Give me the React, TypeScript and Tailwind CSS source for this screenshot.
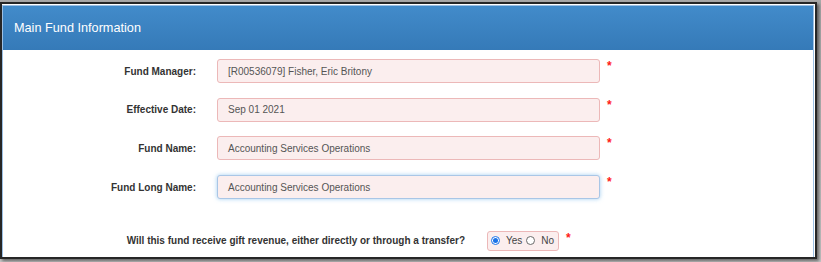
const fields = [
  { label: 'Fund Manager:', value: '[R00536079] Fisher, Eric Britony', focused: false },
  { label: 'Effective Date:', value: 'Sep 01 2021', focused: false },
  { label: 'Fund Name:', value: 'Accounting Services Operations', focused: false },
  { label: 'Fund Long Name:', value: 'Accounting Services Operations', focused: true },
];

const Required = () => (
  <span className="ml-[7px] self-start pt-[1px] text-[12px] leading-[12px] font-bold text-[#ff1a1a]">*</span>
);

const Radio = ({ checked }: { checked: boolean }) => (
  <span
    className={
      checked
        ? 'flex h-[9px] w-[9px] items-center justify-center rounded-full border border-[#1a73e8] bg-white'
        : 'flex h-[9px] w-[9px] items-center justify-center rounded-full border border-[#6b6b6b] bg-white'
    }
  >
    {checked && <span className="h-[5px] w-[5px] rounded-full bg-[#1a73e8]" />}
  </span>
);

export default function App() {
  return (
    <div
      className="h-[262px] w-[821px] bg-gradient-to-b from-[#a9a9a9] to-[#c8c8c8] pt-[2px] pr-[4px] pb-[3px]"
      style={{ fontFamily: '"Liberation Sans", Arial, sans-serif' }}
    >
      <div className="h-full border-2 border-[#262626] bg-white pt-[1px] pr-[1px] shadow-[2px_2px_3px_rgba(0,0,0,0.5)]">
        <div className="h-full border border-[#9cc0e4] border-b-0">
          <div className="flex h-[44px] items-center bg-gradient-to-b from-[#428bca] to-[#357ab8] pt-[1px] pl-[11px] text-[12.7px] text-white">
            Main Fund Information
          </div>

          <div className="flex flex-col gap-[14.7px] pt-[9px]">
            {fields.map((f) => (
              <div key={f.label} className="flex items-center">
                <div className="w-[193px] text-right text-[10px] font-bold text-[#333]">{f.label}</div>
                <div
                  className={
                    f.focused
                      ? 'ml-[21px] flex h-[24px] w-[383px] items-center rounded-[3px] border border-[#a9c6e6] bg-[#fbeeee] pl-[10px] text-[10px] text-[#555] shadow-[0_0_4px_rgba(102,175,233,0.6)]'
                      : 'ml-[21px] flex h-[24px] w-[383px] items-center rounded-[3px] border border-[#ecb8b8] bg-[#fbeeee] pl-[10px] text-[10px] text-[#555]'
                  }
                >
                  {f.value}
                </div>
                <Required />
              </div>
            ))}

            <div className="mt-[17px] flex items-center">
              <div className="w-[462px] text-right text-[10px] font-bold text-[#333]">
                Will this fund receive gift revenue, either directly or through a transfer?
              </div>
              <div className="ml-[22px] flex h-[20px] w-[72px] items-center rounded-[3px] border border-[#ecb8b8] bg-[#fbeeee] pl-[3px] text-[10px] text-[#444]">
                <Radio checked />
                <span className="ml-[6px]">Yes</span>
                <span className="ml-[4px]">
                  <Radio checked={false} />
                </span>
                <span className="ml-[6px]">No</span>
              </div>
              <Required />
            </div>
          </div>
        </div>
      </div>
    </div>
  );
}
